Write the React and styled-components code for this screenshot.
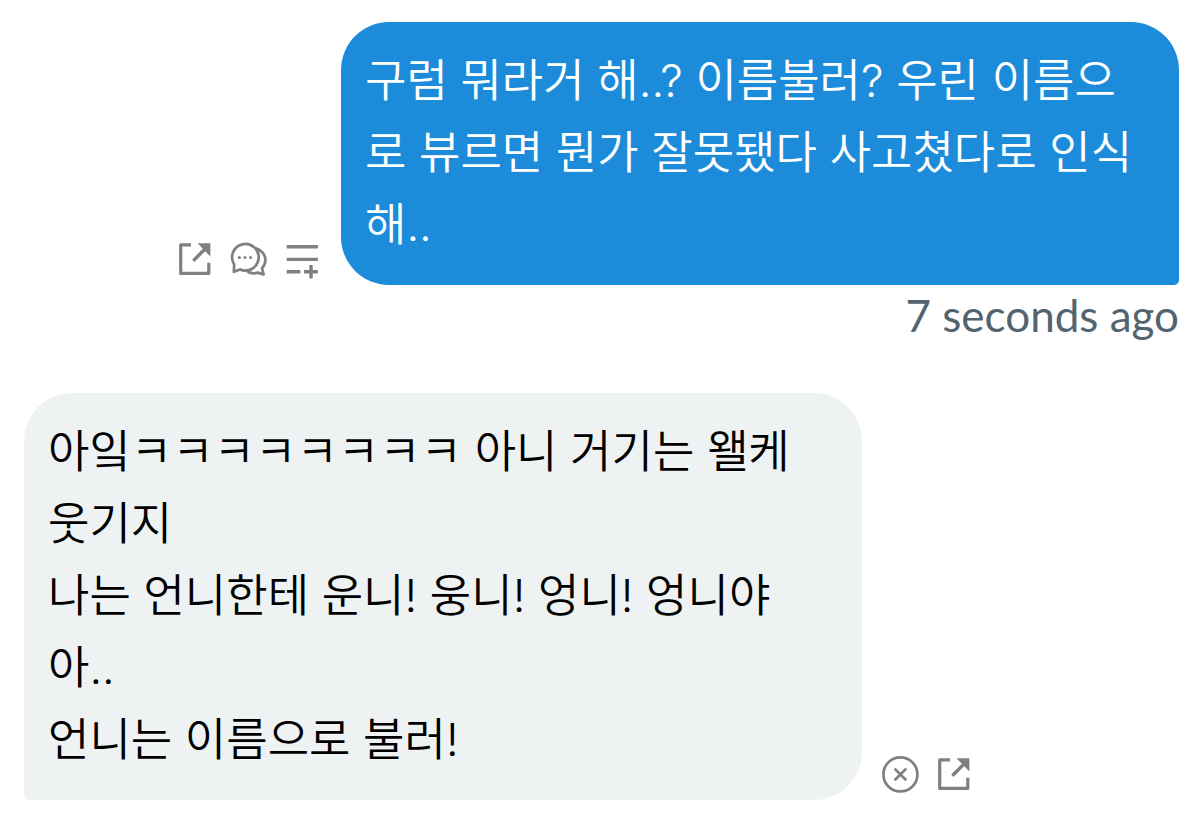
import React from 'react'
import styled, { createGlobalStyle } from 'styled-components'

const GlobalStyle = createGlobalStyle`
    body {
        margin: 0;
        background: #ffffff;
    }
    * {
        box-sizing: border-box;
    }
`

const Thread = styled.main`
    display: flex;
    flex-direction: column;
    gap: 48px;
    padding: 22px 21px 24px 24px;
    font-family: Inter, "Noto Sans CJK KR", sans-serif;
`

const Message = styled.article`
    display: flex;
    flex-direction: column;
`

const Row = styled.div`
    display: flex;
    align-items: flex-end;
    justify-content: ${(props) => (props.$mine ? 'flex-end' : 'flex-start')};
    gap: 18px;
`

const Bubble = styled.p`
    width: 73%;
    max-width: 838px;
    margin: 0;
    padding: 23px 26px 24px 24px;
    border-radius: ${(props) => (props.$mine ? '48px 48px 5px 48px' : '48px 48px 48px 5px')};
    background: ${(props) => (props.$mine ? '#1c8cda' : '#eef2f3')};
    color: ${(props) => (props.$mine ? '#ffffff' : '#000000')};
    font-size: 45px;
    font-weight: 350;
    line-height: 72px;
    white-space: pre-line;
`

const Time = styled.time`
    align-self: flex-end;
    color: #536471;
    font-family: Lato, sans-serif;
    font-size: 44px;
    line-height: 60px;
`

const Actions = styled.div`
    display: flex;
    gap: 14px;
    padding-bottom: 6px;
`

const IconButton = styled.button`
    width: 40px;
    height: 40px;
    padding: 0;
    border: none;
    background: none;
    color: #808080;
    cursor: pointer;
`

const Icon = styled.svg`
    display: block;
    width: 100%;
    height: 100%;
    fill: none;
    stroke: currentColor;
    stroke-width: 3;
`

function OpenIcon() {
  return (
    <Icon viewBox="0 0 40 40" aria-hidden="true">
      <path d="M16 5.8H5.7V34.4H33.8V23.7" strokeWidth="3.2" strokeLinejoin="round" />
      <path d="M18.3 21.7L30 10" strokeWidth="3.4" />
      <path d="M22.6 4.3H35.4V17.6Z" fill="currentColor" stroke="none" />
    </Icon>
  )
}

function ChatIcon() {
  return (
    <Icon viewBox="0 0 40 40" aria-hidden="true" strokeLinejoin="round">
      <g strokeWidth="2.7">
        <path d="M5.2 25.4A13.3 13.3 0 1 1 11 30.4L4.8 32.8Z" />
        <path d="M26.8 9.4C32 10.8 36.4 15.4 36.4 21C36.4 24.3 35 27.2 33 29.3L34.6 35.4L28.6 33.6C24.6 35.2 20.8 34.6 17 31.4" />
      </g>
      <g fill="currentColor" stroke="none">
        <circle cx="10.4" cy="18.4" r="1.5" />
        <circle cx="16" cy="18.4" r="1.5" />
        <circle cx="21.6" cy="18.4" r="1.5" />
      </g>
    </Icon>
  )
}

function AddListIcon() {
  return (
    <Icon viewBox="0 0 40 40" aria-hidden="true">
      <path d="M3.7 7.8H34.9M3.7 20.4H34.9M3.7 32.8H17.4M21 32.8H34.9M28 26V39.6" strokeWidth="3.4" />
    </Icon>
  )
}

function CloseIcon() {
  return (
    <Icon viewBox="0 0 40 40" aria-hidden="true">
      <circle cx="20.4" cy="20.4" r="17" strokeWidth="2.7" />
      <path d="M14.6 14.6L26.2 26.2M26.2 14.6L14.6 26.2" strokeWidth="2.7" />
    </Icon>
  )
}

function App() {
  return (
    <>
      <GlobalStyle />
      <Thread>
        <Message>
          <Row $mine>
            <Actions>
              <IconButton aria-label="Open"><OpenIcon /></IconButton>
              <IconButton aria-label="Reply"><ChatIcon /></IconButton>
              <IconButton aria-label="Add to list"><AddListIcon /></IconButton>
            </Actions>
            <Bubble $mine>구럼 뭐라거 해..? 이름불러? 우린 이름으로 뷰르면 뭔가 잘못됐다 사고쳤다로 인식해..</Bubble>
          </Row>
          <Time>7 seconds ago</Time>
        </Message>

        <Message>
          <Row>
            <Bubble>
              {'아잌ㅋㅋㅋㅋㅋㅋㅋㅋ 아니 거기는 왤케 웃기지\n나는 언니한테 운니! 웅니! 엉니! 엉니야아..\n언니는 이름으로 불러!'}
            </Bubble>
            <Actions>
              <IconButton aria-label="Remove"><CloseIcon /></IconButton>
              <IconButton aria-label="Open"><OpenIcon /></IconButton>
            </Actions>
          </Row>
        </Message>
      </Thread>
    </>
  )
}

export default App
